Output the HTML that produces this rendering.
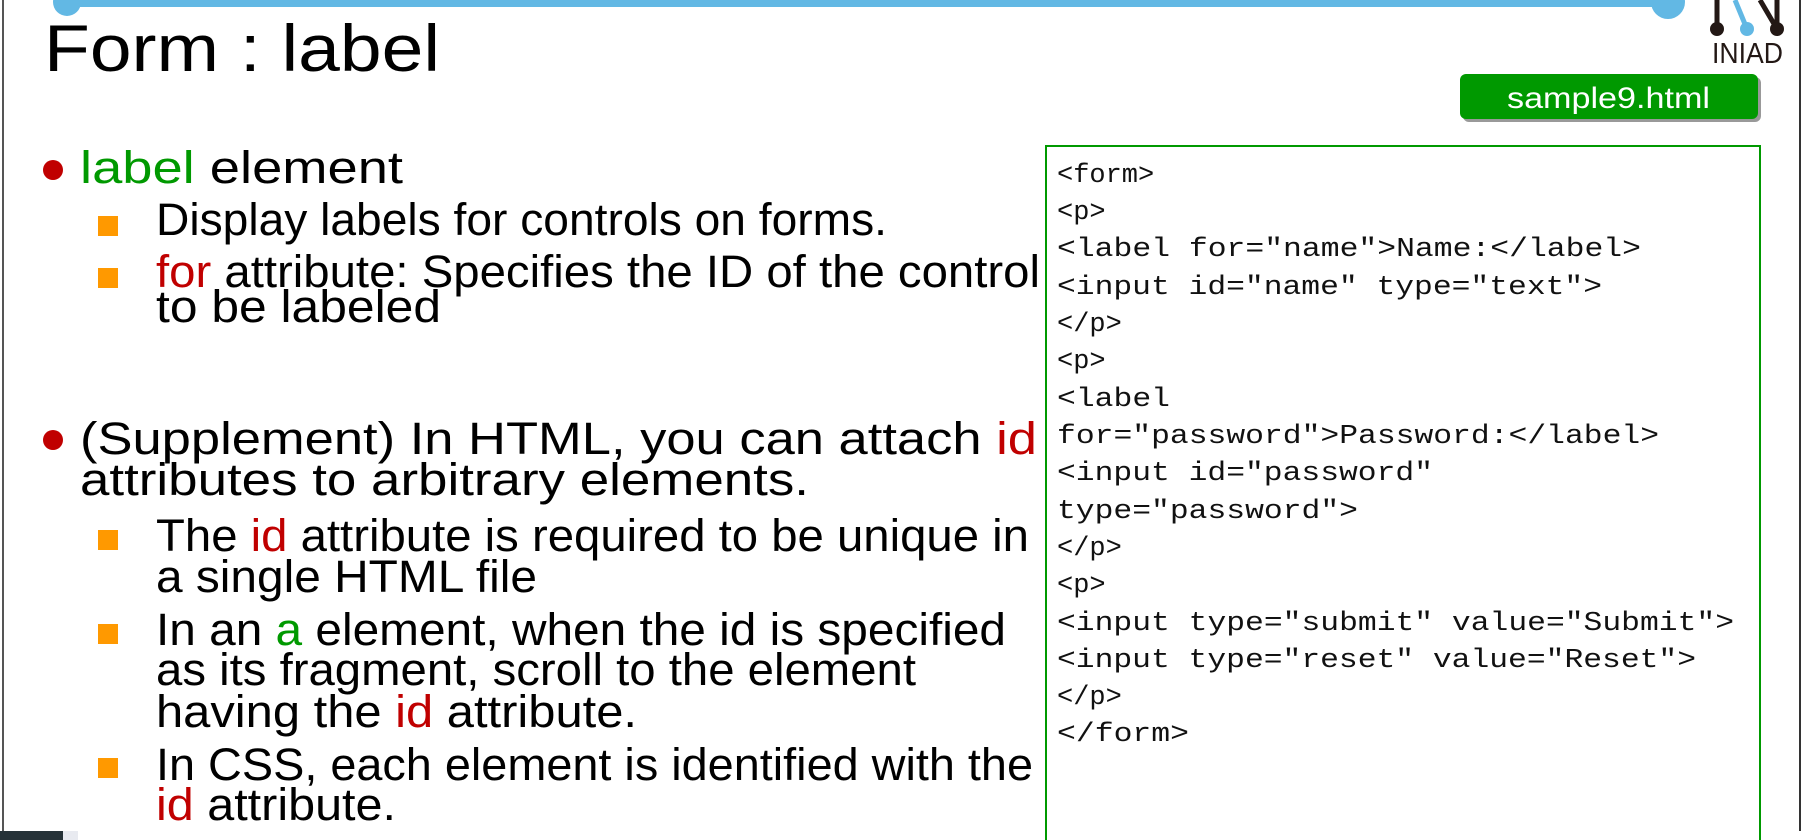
<!DOCTYPE html>
<html><head><meta charset="utf-8"><style>html,body{margin:0;padding:0;background:#fff;}svg{display:block}</style></head>
<body>
<svg width="1806" height="840" viewBox="0 0 1806 840" xmlns="http://www.w3.org/2000/svg">
<rect width="1806" height="840" fill="#fff"/>
<line x1="3" y1="0" x2="3" y2="831" stroke="#555" stroke-width="2"/>
<line x1="1800" y1="0" x2="1800" y2="831" stroke="#333" stroke-width="2"/>
<rect x="0" y="831" width="63" height="9" fill="#263238"/>
<rect x="63" y="831" width="15" height="9" fill="#e8eaf0"/>
<!-- top bar -->
<rect x="67" y="0" width="1601" height="7" fill="#62b8e4"/>
<circle cx="67" cy="2" r="14" fill="#62b8e4"/>
<circle cx="1668" cy="2" r="17" fill="#62b8e4"/>
<!-- logo -->
<line x1="1717" y1="0" x2="1717" y2="29" stroke="#231815" stroke-width="5"/>
<line x1="1735" y1="0" x2="1747" y2="29" stroke="#62b8e4" stroke-width="5"/>
<line x1="1760" y1="0" x2="1777" y2="29" stroke="#231815" stroke-width="5"/>
<line x1="1777" y1="0" x2="1777" y2="29" stroke="#231815" stroke-width="5"/>
<circle cx="1717" cy="29" r="7" fill="#231815"/>
<circle cx="1747" cy="29" r="7" fill="#62b8e4"/>
<circle cx="1777" cy="29" r="7" fill="#231815"/>
<text x="1712" y="63" font-family="Liberation Sans, sans-serif" font-size="29" fill="#231815" textLength="71" lengthAdjust="spacingAndGlyphs">INIAD</text>
<!-- title -->
<text x="44" y="71" font-family="Liberation Sans, sans-serif" font-size="66" fill="#000" textLength="396" lengthAdjust="spacingAndGlyphs">Form : label</text>
<!-- button -->
<rect x="1463" y="77" width="298" height="45" rx="6" fill="#999"/>
<rect x="1460" y="74" width="298" height="45" rx="6" fill="#009900"/>
<text x="1507" y="108" font-family="Liberation Sans, sans-serif" font-size="30" fill="#fff" textLength="203" lengthAdjust="spacingAndGlyphs">sample9.html</text>
<!-- code box -->
<rect x="1046" y="146" width="714" height="700" fill="#fff" stroke="#009900" stroke-width="2"/>
<g font-family="Liberation Mono, monospace" font-size="27" fill="#111" xml:space="preserve">
<text x="1057" y="182">&lt;form&gt;</text>
<text x="1057" y="219">&lt;p&gt;</text>
<text x="1057" y="256" textLength="584" lengthAdjust="spacingAndGlyphs">&lt;label for="name"&gt;Name:&lt;/label&gt;</text>
<text x="1057" y="294" textLength="545" lengthAdjust="spacingAndGlyphs">&lt;input id="name" type="text"&gt;</text>
<text x="1057" y="331">&lt;/p&gt;</text>
<text x="1057" y="368">&lt;p&gt;</text>
<text x="1057" y="406" textLength="113" lengthAdjust="spacingAndGlyphs">&lt;label</text>
<text x="1057" y="443" textLength="602" lengthAdjust="spacingAndGlyphs">for="password"&gt;Password:&lt;/label&gt;</text>
<text x="1057" y="480" textLength="376" lengthAdjust="spacingAndGlyphs">&lt;input id="password"</text>
<text x="1057" y="518" textLength="301" lengthAdjust="spacingAndGlyphs">type="password"&gt;</text>
<text x="1057" y="555">&lt;/p&gt;</text>
<text x="1057" y="592">&lt;p&gt;</text>
<text x="1057" y="630" textLength="677" lengthAdjust="spacingAndGlyphs">&lt;input type="submit" value="Submit"&gt;</text>
<text x="1057" y="667" textLength="639" lengthAdjust="spacingAndGlyphs">&lt;input type="reset" value="Reset"&gt;</text>
<text x="1057" y="704">&lt;/p&gt;</text>
<text x="1057" y="741" textLength="132" lengthAdjust="spacingAndGlyphs">&lt;/form&gt;</text>
</g>
<!-- bullets -->
<circle cx="53" cy="170" r="10" fill="#c00000"/>
<circle cx="53" cy="440" r="10" fill="#c00000"/>
<g fill="#ff9900">
<rect x="98" y="216" width="20" height="20"/>
<rect x="98" y="268" width="20" height="20"/>
<rect x="98" y="530" width="20" height="20"/>
<rect x="98" y="624" width="20" height="20"/>
<rect x="98" y="758" width="20" height="20"/>
</g>
<g font-family="Liberation Sans, sans-serif" font-size="45" fill="#000">
<text x="80" y="183" textLength="323" lengthAdjust="spacingAndGlyphs"><tspan fill="#009900">label</tspan> element</text>
<text x="156" y="235" textLength="731" lengthAdjust="spacingAndGlyphs">Display labels for controls on forms.</text>
<text x="156" y="287" textLength="884" lengthAdjust="spacingAndGlyphs"><tspan fill="#c00000">for</tspan> attribute: Specifies the ID of the control</text>
<text x="156" y="322" textLength="285" lengthAdjust="spacingAndGlyphs">to be labeled</text>
<text x="80" y="454" textLength="957" lengthAdjust="spacingAndGlyphs">(Supplement) In HTML, you can attach <tspan fill="#c00000">id</tspan></text>
<text x="80" y="495" textLength="729" lengthAdjust="spacingAndGlyphs">attributes to arbitrary elements.</text>
<text x="156" y="551" textLength="873" lengthAdjust="spacingAndGlyphs">The <tspan fill="#c00000">id</tspan> attribute is required to be unique in</text>
<text x="156" y="592" textLength="381" lengthAdjust="spacingAndGlyphs">a single HTML file</text>
<text x="156" y="645" textLength="850" lengthAdjust="spacingAndGlyphs">In an <tspan fill="#009900">a</tspan> element, when the id is specified</text>
<text x="156" y="685" textLength="760" lengthAdjust="spacingAndGlyphs">as its fragment, scroll to the element</text>
<text x="156" y="727" textLength="481" lengthAdjust="spacingAndGlyphs">having the <tspan fill="#c00000">id</tspan> attribute.</text>
<text x="156" y="780" textLength="877" lengthAdjust="spacingAndGlyphs">In CSS, each element is identified with the</text>
<text x="156" y="820" textLength="240" lengthAdjust="spacingAndGlyphs"><tspan fill="#c00000">id</tspan> attribute.</text>
</g>
</svg>
</body></html>
